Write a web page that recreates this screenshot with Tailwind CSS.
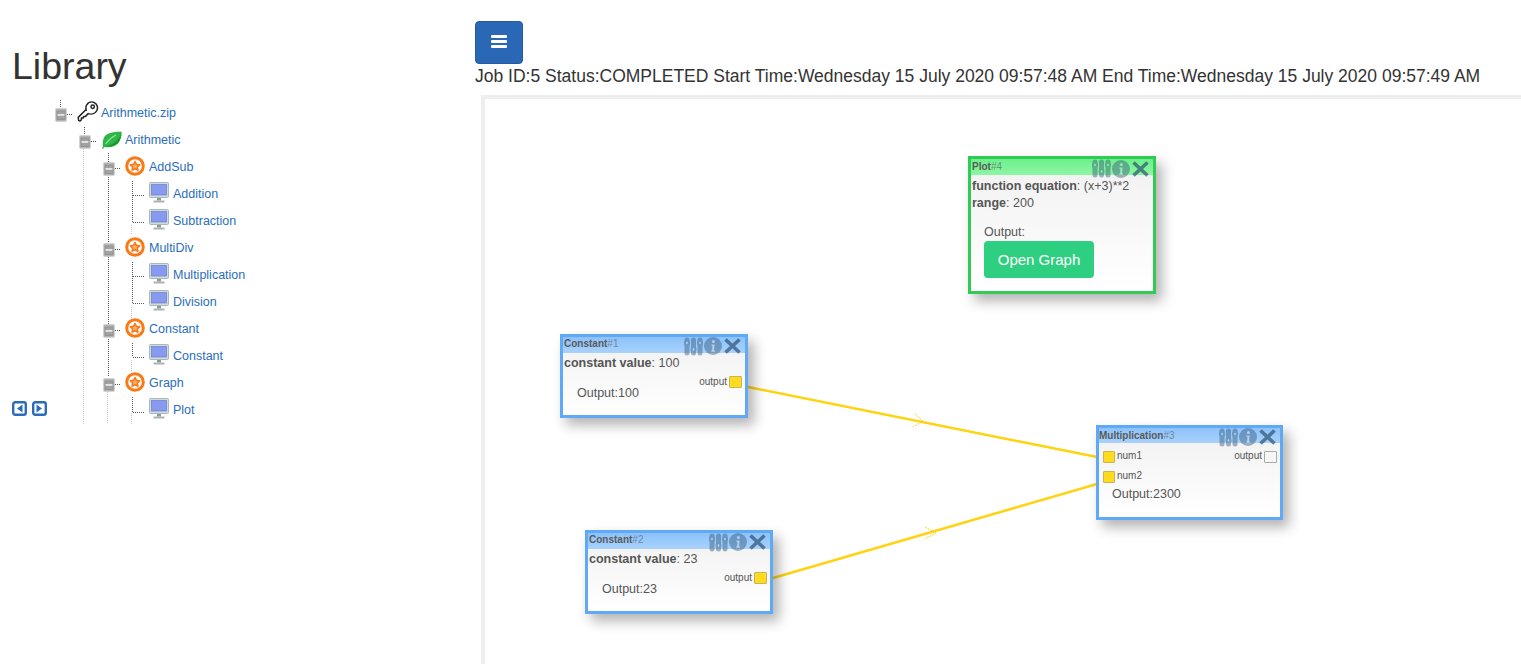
<!DOCTYPE html>
<html lang="en">
<head>
<meta charset="UTF-8" />
<title>Workflow Job</title>
<script src="https://cdn.jsdelivr.net/npm/@tailwindcss/browser@4"></script>
</head>
<body class="h-[664px] overflow-hidden bg-white font-['Liberation_Sans',Arial,sans-serif] text-[#333]">

<svg class="hidden">
  <symbol id="minus-box" viewBox="0 0 12 14">
    <rect x="0.5" y="0.5" width="11" height="13" rx="1" fill="#b4b4b4" stroke="#d2d2d2"/>
    <rect x="2" y="3" width="8" height="8.500" fill="#a2a2a2" stroke="#8b8b8b" stroke-width="0.7"/>
    <rect x="2.500" y="6.200" width="7" height="1.500" fill="#f4f4f4"/>
  </symbol>
  <symbol id="star-ring" viewBox="0 0 20 20">
    <circle cx="10" cy="10" r="8.300" fill="#fff" stroke="#fb7a18" stroke-width="3"/>
    <path d="M10 5.500l1.400 2.900 3.200.4-2.300 2.200.6 3.200-2.900-1.500-2.900 1.500.6-3.200-2.300-2.200 3.200-.4z" fill="#fbb070" stroke="#fb7a18" stroke-width="1.600" stroke-linejoin="round"/>
  </symbol>
  <symbol id="monitor" viewBox="0 0 20 21">
    <rect x="0.500" y="0.500" width="19" height="15" rx="1" fill="#d0dcda" stroke="#a9b9b7"/>
    <rect x="2.500" y="2.500" width="15" height="10.500" fill="#8899f0" stroke="#6c7dd0" stroke-width="0.700"/>
    <rect x="8" y="16" width="4" height="2.500" fill="#8d9a98"/>
    <rect x="4.500" y="18.500" width="11" height="2" fill="#a9b6b4"/>
  </symbol>
  <symbol id="sliders" viewBox="0 0 19 19">
    <g fill="#37597a">
      <rect x="0.500" y="0.500" width="5" height="18" rx="2.500"/>
      <rect x="7" y="0.500" width="5" height="18" rx="2.500"/>
      <rect x="13.500" y="0.500" width="5" height="18" rx="2.500"/>
      <ellipse cx="3" cy="6" rx="3" ry="3.200"/>
      <ellipse cx="9.500" cy="12.500" rx="3" ry="3.200"/>
      <ellipse cx="16" cy="6" rx="3" ry="3.200"/>
    </g>
    <g fill="#dfe9f2">
      <rect x="2.300" y="4.800" width="1.400" height="2.400" rx="0.700"/>
      <rect x="8.800" y="11.300" width="1.400" height="2.400" rx="0.700"/>
      <rect x="15.300" y="4.800" width="1.400" height="2.400" rx="0.700"/>
    </g>
  </symbol>
  <symbol id="info" viewBox="0 0 18 18">
    <circle cx="9" cy="9" r="9" fill="#37597a"/>
    <circle cx="9.400" cy="4.600" r="1.500" fill="#c8d6e3"/>
    <path d="M7.400 7.600h3.200l-.6 6h1v1.100H7.200v-1.100h.9l.4-4.900H7.400z" fill="#c8d6e3"/>
  </symbol>
  <symbol id="cross" viewBox="0 0 18 18">
    <path d="M2 2.500l14 13M16 2.500l-14 13" stroke="#25486a" stroke-width="3.600" fill="none"/>
  </symbol>
</svg>

<div class="flex h-full">
  <aside class="w-[475px] shrink-0 relative">
    <h1 class="text-[37.500px] leading-[40px] pl-3 pt-[46px] h-[99px]">Library</h1>

    <div class="relative h-[325px] text-[12.500px] leading-[27px] text-[#2a6ebb]">
      <!-- dotted tree connectors -->
      <svg class="absolute left-0 top-0" width="260" height="325" fill="none" stroke-width="1" stroke-dasharray="1 1">
        <g stroke="#555">
          <path d="M60.500 1V9M84.500 28V36M108.500 54V278M132.500 82V123M132.500 163V204M132.500 244V258M132.500 298V313"/>
          <path d="M67 15.500H73M91 42.500H97M115 69.500H121M115 150.500H121M115 231.500H121M115 285.500H121"/>
          <path d="M133 96.500H145M133 123.500H145M133 177.500H145M133 204.500H145M133 258.500H145M133 313.500H145"/>
        </g>
        <g stroke="#c4c4c4">
          <path d="M83.500 48V325M107.500 293V325M131.500 126V136M131.500 208V219M131.500 261V273M131.500 314V325"/>
        </g>
      </svg>

      <div class="relative h-[27px] flex items-center pl-[55px]">
        <svg class="w-[12px] h-[14px] mt-[4px]"><use href="#minus-box"/></svg>
        <svg class="w-[22px] h-[22px] ml-[10px] mr-[2px] -mt-[2px]" viewBox="0 0 22 22" fill="none" stroke="#222" stroke-width="1.500">
          <path d="M8.300 9.200 1.200 16.400l.4 3 1.500.6 1.300-1.300v-1.600h1.700l.6-1.500h1.500l3-3c3.500 1.200 7-.2 8.600-3 1.500-3 .4-6.500-2.500-8-2.800-1.300-6-.4-7.600 2.200-.9 1.600-1 3.700-.4 5.400z" stroke-linejoin="round"/>
          <circle cx="15.700" cy="5.800" r="1.700"/>
        </svg>
        <span class="pt-px">Arithmetic.zip</span>
      </div>
      <div class="relative h-[27px] flex items-center pl-[79px]">
        <svg class="w-[12px] h-[14px] mt-[4px]"><use href="#minus-box"/></svg>
        <svg class="w-[20px] h-[18px] ml-[11px] mr-[3px]" viewBox="0 0 20 18">
          <path d="M19.500 .5C14 1 6 1 3 5 .5 8.500 .5 13 1 15.500L0 17.500l1 .5 1.300-2c5 .6 10 0 13.500-3.500C18.500 10 19.800 5 19.500 .5z" fill="#2fb54a"/>
          <path d="M19.300 1.500C18 6.500 15.500 10 11 12.500 8 14.300 5 15.300 2.300 15.800 8 16 13 15 15.500 12.500 18 10 19.500 5.500 19.300 1.500z" fill="#149a2e"/>
          <path d="M3.500 13C6 9.500 9 6.500 14 4" stroke="#8de88c" stroke-width="1.200" fill="none"/>
        </svg>
        <span class="pt-px">Arithmetic</span>
      </div>

      <div class="relative h-[27px] flex items-center pl-[103px]">
        <svg class="w-[12px] h-[14px] mt-[4px]"><use href="#minus-box"/></svg>
        <svg class="w-[20px] h-[20px] ml-[10px] mr-[4px] -mt-[1px]"><use href="#star-ring"/></svg>
        <span class="pt-px">AddSub</span>
      </div>
      <div class="relative h-[27px] flex items-center pl-[149px]">
        <svg class="w-[20px] h-[21px] mr-[4px] -mt-[2px]"><use href="#monitor"/></svg>
        <span class="pt-px">Addition</span>
      </div>
      <div class="relative h-[27px] flex items-center pl-[149px]">
        <svg class="w-[20px] h-[21px] mr-[4px] -mt-[2px]"><use href="#monitor"/></svg>
        <span class="pt-px">Subtraction</span>
      </div>

      <div class="relative h-[27px] flex items-center pl-[103px]">
        <svg class="w-[12px] h-[14px] mt-[4px]"><use href="#minus-box"/></svg>
        <svg class="w-[20px] h-[20px] ml-[10px] mr-[4px] -mt-[1px]"><use href="#star-ring"/></svg>
        <span class="pt-px">MultiDiv</span>
      </div>
      <div class="relative h-[27px] flex items-center pl-[149px]">
        <svg class="w-[20px] h-[21px] mr-[4px] -mt-[2px]"><use href="#monitor"/></svg>
        <span class="pt-px">Multiplication</span>
      </div>
      <div class="relative h-[27px] flex items-center pl-[149px]">
        <svg class="w-[20px] h-[21px] mr-[4px] -mt-[2px]"><use href="#monitor"/></svg>
        <span class="pt-px">Division</span>
      </div>

      <div class="relative h-[27px] flex items-center pl-[103px]">
        <svg class="w-[12px] h-[14px] mt-[4px]"><use href="#minus-box"/></svg>
        <svg class="w-[20px] h-[20px] ml-[10px] mr-[4px] -mt-[1px]"><use href="#star-ring"/></svg>
        <span class="pt-px">Constant</span>
      </div>
      <div class="relative h-[27px] flex items-center pl-[149px]">
        <svg class="w-[20px] h-[21px] mr-[4px] -mt-[2px]"><use href="#monitor"/></svg>
        <span class="pt-px">Constant</span>
      </div>

      <div class="relative h-[27px] flex items-center pl-[103px]">
        <svg class="w-[12px] h-[14px] mt-[4px]"><use href="#minus-box"/></svg>
        <svg class="w-[20px] h-[20px] ml-[10px] mr-[4px] -mt-[1px]"><use href="#star-ring"/></svg>
        <span class="pt-px">Graph</span>
      </div>
      <div class="relative h-[27px] flex items-center pl-[149px]">
        <svg class="w-[20px] h-[21px] mr-[4px] -mt-[2px]"><use href="#monitor"/></svg>
        <span class="pt-px">Plot</span>
      </div>

      <!-- pager -->
      <div class="absolute left-[12px] top-[302px] flex gap-[5px]">
        <svg width="15" height="15" viewBox="0 0 15 15"><rect x="1.200" y="1.200" width="12.600" height="12.600" rx="2" fill="#fff" stroke="#2a6ebb" stroke-width="2.400"/><path d="M10.500 3.500v8L5 7.500z" fill="#2a6ebb"/></svg>
        <svg width="15" height="15" viewBox="0 0 15 15"><rect x="1.200" y="1.200" width="12.600" height="12.600" rx="2" fill="#fff" stroke="#2a6ebb" stroke-width="2.400"/><path d="M4.500 3.500v8l5.500-4z" fill="#2a6ebb"/></svg>
      </div>
    </div>
  </aside>

  <main class="flex-1 min-w-0 flex flex-col">
    <div class="h-[95px] pt-[21px]">
      <button class="w-[48px] h-[43px] pb-[2px] bg-[#2a67b5] rounded-[4px] border border-[#245a9f] flex flex-col items-center justify-center gap-[2px]">
        <span class="w-[16px] h-[3px] bg-white rounded-[1px]"></span>
        <span class="w-[16px] h-[3px] bg-white rounded-[1px]"></span>
        <span class="w-[16px] h-[3px] bg-white rounded-[1px]"></span>
      </button>
      <div class="text-[17.500px] leading-[25px] whitespace-nowrap">Job ID:5 Status:COMPLETED Start Time:Wednesday 15 July 2020 09:57:48 AM End Time:Wednesday 15 July 2020 09:57:49 AM</div>
    </div>

    <div class="relative flex-1 ml-[6px] border-l-[4px] border-t-[4px] border-[#eeeeee] text-[#555]">
      <!-- links between nodes -->
      <svg class="absolute left-0 top-0" width="1036" height="565" fill="none">
        <path d="M263 288L612 358M288 479L612 385" stroke="#ffd30f" stroke-width="2.500"/>
        <path d="M430 315L438 322L428 328M440 428L451 434L440 440" stroke="#fcd116" stroke-width="1" stroke-dasharray="2 1"/>
      </svg>

      <!-- Plot #4 -->
      <div class="absolute left-[483px] top-[57px] w-[188px] h-[138px] border-[3px] border-[#2fcb55] bg-linear-to-b from-[#f1f1f1] to-white shadow-[6px_7px_12px_rgba(0,0,0,0.3)]">
        <div class="relative h-[16px] bg-linear-to-b from-[#6df08c] to-[#8df5a4] text-[10px] leading-[16px] font-bold text-[#5a5a5a] pl-[1px]">Plot<span class="font-normal text-[#555]/60">#4</span>
          <div class="absolute right-[3px] top-0 flex gap-[1px] blur-[0.4px]">
            <svg class="w-[19px] h-[19px] opacity-45"><use href="#sliders"/></svg>
            <svg class="w-[18px] h-[18px] mt-px opacity-45"><use href="#info"/></svg>
            <svg class="w-[19px] h-[18px] mt-px opacity-65"><use href="#cross"/></svg>
          </div>
        </div>
        <div class="text-[12.500px] leading-[17px] pl-[1px] pt-[3px]"><b>function equation</b>: (x+3)**2</div>
        <div class="text-[12.500px] leading-[17px] pl-[1px]"><b>range</b>: 200</div>
        <div class="text-[12.500px] leading-[17px] pl-[13px] pt-[12px]">Output:</div>
        <div class="pl-[13px]">
          <button class="w-[110px] h-[37px] pt-px bg-[#2ecf80] rounded-[4px] text-white text-[15px]">Open Graph</button>
        </div>
      </div>

      <!-- Constant #1 -->
      <div class="absolute left-[75px] top-[235px] w-[188px] h-[84px] border-[3px] border-[#60a9f6] bg-linear-to-b from-[#f1f1f1] to-white shadow-[6px_7px_12px_rgba(0,0,0,0.3)]">
        <div class="relative h-[16px] bg-linear-to-b from-[#8cc2fa] to-[#a8d2fb] text-[10px] leading-[14px] font-bold text-[#5a5a5a] pl-[1px]">Constant<span class="font-normal text-[#555]/60">#1</span>
          <div class="absolute right-[3px] top-0 flex gap-[1px] blur-[0.4px]">
            <svg class="w-[19px] h-[19px] opacity-45"><use href="#sliders"/></svg>
            <svg class="w-[18px] h-[18px] opacity-45"><use href="#info"/></svg>
            <svg class="w-[19px] h-[18px] opacity-65"><use href="#cross"/></svg>
          </div>
        </div>
        <div class="text-[12.500px] leading-[18px] pl-[1px] pt-px"><b>constant value</b>: 100</div>
        <div class="flex justify-end items-center gap-[2px] h-[13px] pr-[3px] mt-[3px] text-[10px]">output<span class="w-[13px] h-[12px] rounded-[1px] border border-[#c9b45a] bg-[#ffdb1f]"></span></div>
        <div class="text-[12.500px] leading-[17px] pl-[14px] -mt-[3px]">Output:100</div>
      </div>

      <!-- Constant #2 -->
      <div class="absolute left-[100px] top-[431px] w-[188px] h-[84px] border-[3px] border-[#60a9f6] bg-linear-to-b from-[#f1f1f1] to-white shadow-[6px_7px_12px_rgba(0,0,0,0.3)]">
        <div class="relative h-[16px] bg-linear-to-b from-[#8cc2fa] to-[#a8d2fb] text-[10px] leading-[14px] font-bold text-[#5a5a5a] pl-[1px]">Constant<span class="font-normal text-[#555]/60">#2</span>
          <div class="absolute right-[3px] top-0 flex gap-[1px] blur-[0.4px]">
            <svg class="w-[19px] h-[19px] opacity-45"><use href="#sliders"/></svg>
            <svg class="w-[18px] h-[18px] opacity-45"><use href="#info"/></svg>
            <svg class="w-[19px] h-[18px] opacity-65"><use href="#cross"/></svg>
          </div>
        </div>
        <div class="text-[12.500px] leading-[18px] pl-[1px] pt-px"><b>constant value</b>: 23</div>
        <div class="flex justify-end items-center gap-[2px] h-[13px] pr-[3px] mt-[3px] text-[10px]">output<span class="w-[13px] h-[12px] rounded-[1px] border border-[#c9b45a] bg-[#ffdb1f]"></span></div>
        <div class="text-[12.500px] leading-[17px] pl-[14px] -mt-[3px]">Output:23</div>
      </div>

      <!-- Multiplication #3 -->
      <div class="absolute left-[611px] top-[326px] w-[187px] h-[95px] border-[3px] border-[#60a9f6] bg-linear-to-b from-[#f1f1f1] to-white shadow-[6px_7px_12px_rgba(0,0,0,0.3)]">
        <div class="relative h-[15px] bg-linear-to-b from-[#8cc2fa] to-[#a8d2fb] text-[10px] leading-[16px] font-bold text-[#5a5a5a]">Multiplication<span class="font-normal text-[#555]/60">#3</span>
          <div class="absolute right-[3px] top-0 flex gap-[1px] blur-[0.4px]">
            <svg class="w-[19px] h-[19px] opacity-45"><use href="#sliders"/></svg>
            <svg class="w-[18px] h-[18px] opacity-45"><use href="#info"/></svg>
            <svg class="w-[19px] h-[18px] opacity-65"><use href="#cross"/></svg>
          </div>
        </div>
        <div class="flex items-center justify-between h-[13px] mt-[7px] pl-[4px] pr-[3px] text-[10px]">
          <span class="flex items-center gap-[2px]"><span class="w-[12px] h-[12px] rounded-[1px] border border-[#c9b45a] bg-[#ffdb1f]"></span><span class="-mt-[3px]">num1</span></span>
          <span class="flex items-center gap-[2px]"><span class="-mt-[3px]">output</span><span class="w-[13px] h-[12px] rounded-[1px] border border-[#aaa] bg-[#f7f7f7]"></span></span>
        </div>
        <div class="flex items-center h-[13px] mt-[7px] pl-[4px] text-[10px] gap-[2px]"><span class="w-[12px] h-[12px] rounded-[1px] border border-[#c9b45a] bg-[#ffdb1f]"></span><span class="-mt-[3px]">num2</span></div>
        <div class="text-[12.500px] leading-[17px] pl-[13px] pt-[3px]">Output:2300</div>
      </div>
    </div>
  </main>
</div>
</body>
</html>
